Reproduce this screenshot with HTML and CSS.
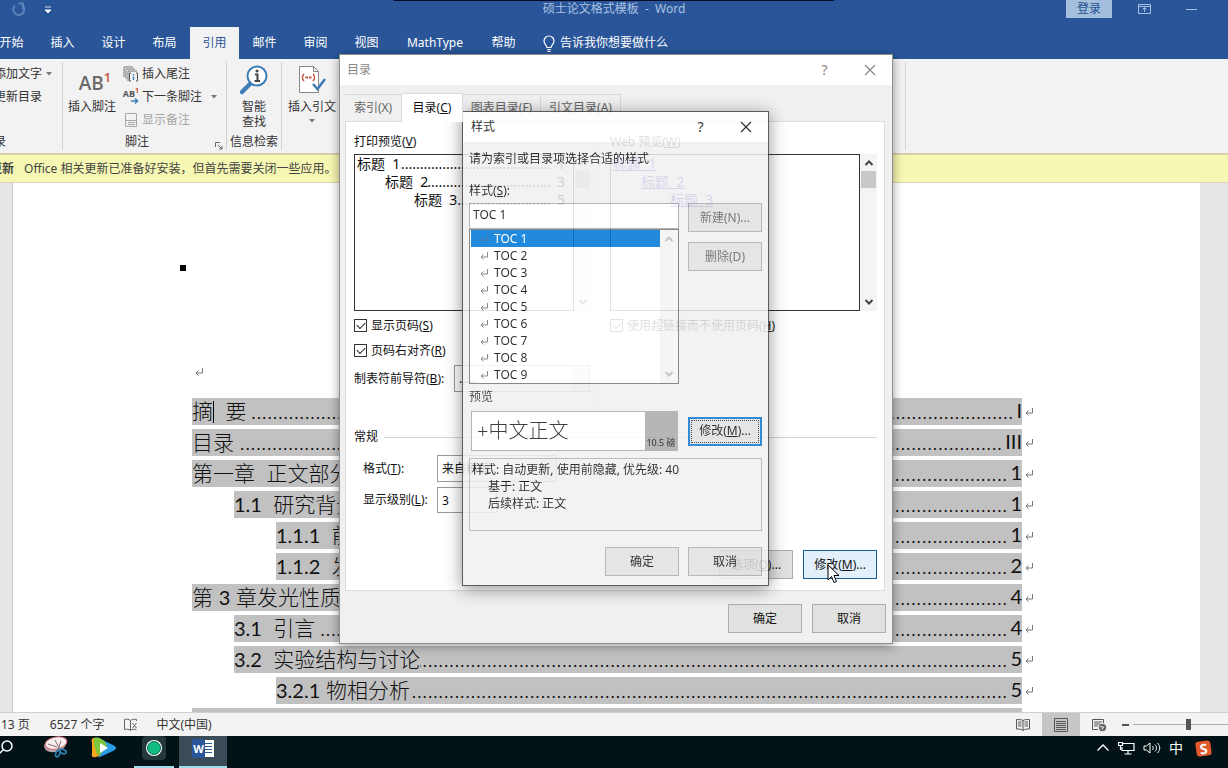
FILE: index.html
```html
<!DOCTYPE html>
<html lang="zh-CN">
<head>
<meta charset="utf-8">
<title>硕士论文格式模板 - Word</title>
<link rel="stylesheet" href="styles.css">
</head>
<body>
<svg class="defs" aria-hidden="true">
  <symbol id="ret" viewBox="0 0 10 10"><path d="M8.500 1v5H2M4.500 3.500L2 6l2.500 2.500" fill="none" stroke="currentColor"/></symbol>
  <symbol id="close" viewBox="0 0 12 12"><path d="M1 1l10 10M11 1L1 11" fill="none" stroke="currentColor" stroke-width="1.200"/></symbol>
  <symbol id="up" viewBox="0 0 10 8"><path d="M1.500 6L5 2.500 8.500 6" fill="none" stroke="currentColor" stroke-width="2"/></symbol>
  <symbol id="down" viewBox="0 0 10 8"><path d="M1.500 2L5 5.500 8.500 2" fill="none" stroke="currentColor" stroke-width="2"/></symbol>
  <symbol id="caret" viewBox="0 0 6 4"><path d="M0 0h6L3 3.500z" fill="currentColor"/></symbol>
</svg>

<header class="titlebar">
  <div class="quick">
    <svg width="20" height="16" viewBox="0 0 20 16" class="dim"><path d="M5 3.500A5.500 5.500 0 1 0 12 3M8.500 1.500H14M13 2v5.500" fill="none" stroke="currentColor" stroke-width="2"/></svg>
    <svg width="8" height="8" viewBox="0 0 8 8"><path d="M1 1h6M1 4h6L4 7z" fill="#fff" stroke="#fff" stroke-width=".8"/></svg>
  </div>
  <h1 class="doc-title">硕士论文格式模板&nbsp; -&nbsp; Word</h1>
  <div class="win">
    <button class="login">登录</button>
    <svg width="14" height="12" viewBox="0 0 14 12"><path d="M.5 1.500h12v9H.5zM.5 3.500h12M6.500 9V5M4.500 6.500l2-2 2 2" fill="none" stroke="currentColor"/></svg>
    <svg width="12" height="12" viewBox="0 0 12 12"><path d="M0 6.500h11" stroke="currentColor"/></svg>
  </div>
</header>

<nav class="tabs">
  <button>开始</button><button>插入</button><button>设计</button><button>布局</button><button class="on">引用</button><button>邮件</button><button>审阅</button><button>视图</button><button class="wide">MathType</button><button>帮助</button>
  <button class="tell"><svg width="12" height="17" viewBox="0 0 12 17"><path d="M4 12.500c0-2-3-3-3-6.500a5 5 0 0 1 10 0c0 3.500-3 4.500-3 6.500zM4 14.500h4M4.500 16.300h3" fill="none" stroke="#fff" stroke-width="1.200"/></svg>告诉我你想要做什么</button>
</nav>

<section class="ribbon">
  <div class="group g-toc">
    <button class="small">添加文字<svg width="6" height="4"><use href="#caret"/></svg></button>
    <button class="small">更新目录</button>
    <div class="glabel">目录</div>
  </div>
  <div class="group g-foot">
    <button class="big"><span class="ab">AB<sup>1</sup></span>插入脚注</button>
    <div class="stack">
      <button class="small"><svg width="16" height="16" viewBox="0 0 16 16"><path d="M1 11V1h9M3 13V3h9M5 15V5h9" fill="none" stroke="#777"/><path d="M8 7H6.500v8H8M13 7h1.500v8H13" fill="none" stroke="#555"/><path d="M10.500 8v1.500M10.500 10.500V14" stroke="#3e7cb5" stroke-width="1.400"/></svg>插入尾注</button>
      <button class="small"><span class="ab2"><span>AB<sup>1</sup></span><svg width="8" height="6" viewBox="0 0 8 6"><path d="M0 3h6M4 .5L6.500 3 4 5.500" fill="none" stroke="#3e7cb5" stroke-width="1.500"/></svg></span>下一条脚注<svg class="far" width="6" height="4"><use href="#caret"/></svg></button>
      <button class="small off"><svg width="16" height="16" viewBox="0 0 16 16"><path d="M2.500 1.500h11v13h-11zM2.500 8.500h11M5 10.500h7M5 12.500h7" fill="none" stroke="currentColor"/></svg>显示备注</button>
    </div>
    <div class="glabel">脚注</div>
    <svg class="launch" width="8" height="8" viewBox="0 0 8 8"><path d="M.5 5V.5H5M3 3l4 4M7 4v3H4" fill="none" stroke="#666"/></svg>
  </div>
  <div class="group g-look">
    <button class="big"><svg width="28" height="30" viewBox="0 0 28 30"><path d="M10 19L2 27" stroke="#3e7cb5" stroke-width="4.500" stroke-linecap="round"/><circle cx="17" cy="11" r="9.500" fill="#fff" stroke="#3e7cb5" stroke-width="2"/><path d="M15 9.500h2.500v6M14.500 16h5.500" fill="none" stroke="#444" stroke-width="2"/><circle cx="17" cy="6" r="1.500" fill="#444"/></svg>智能<br>查找</button>
    <div class="glabel">信息检索</div>
  </div>
  <div class="group g-cite">
    <button class="big"><svg width="28" height="30" viewBox="0 0 28 30"><path d="M1.500 1.500h14l5 5v21h-19zM15.500 1.500v5h5" fill="#fff" stroke="#888"/><path d="M6 9c-2 2-2 5 0 7M15 9c2 2 2 5 0 7" fill="none" stroke="#c8513c" stroke-width="1.500"/><path d="M7.500 12.500h2.500M11 12.500h2.500" stroke="#c8513c" stroke-width="2"/><path d="M15 19l4.500 5L27 14" fill="none" stroke="#3e7cb5" stroke-width="2.500"/></svg>插入引文<svg class="under" width="6" height="4"><use href="#caret"/></svg></button>
  </div>
</section>

<div class="notice"><b>更新</b><span>Office 相关更新已准备好安装，但首先需要关闭一些应用。</span></div>

<main class="desk">
  <article class="page">
    <div class="bullet"></div>
    <div class="mark"><svg width="10" height="10"><use href="#ret"/></svg></div>
    <div class="toc">
      <div class="row"><p><span>摘<i class="cursor"></i>&nbsp; 要&nbsp;</span><span class="leader"></span><span class="n">I</span></p><svg width="10" height="10"><use href="#ret"/></svg></div>
      <div class="row"><p><span>目录&nbsp;</span><span class="leader"></span><span class="n">III</span></p><svg width="10" height="10"><use href="#ret"/></svg></div>
      <div class="row"><p><span>第一章&nbsp; 正文部分</span><span class="leader"></span><span class="n">1</span></p><svg width="10" height="10"><use href="#ret"/></svg></div>
      <div class="row l2"><p><span><b>1.1</b>&nbsp; 研究背景</span><span class="leader"></span><span class="n">1</span></p><svg width="10" height="10"><use href="#ret"/></svg></div>
      <div class="row l3"><p><span><b>1.1.1</b>&nbsp; 前言</span><span class="leader"></span><span class="n">1</span></p><svg width="10" height="10"><use href="#ret"/></svg></div>
      <div class="row l3"><p><span><b>1.1.2</b>&nbsp; 发展</span><span class="leader"></span><span class="n">2</span></p><svg width="10" height="10"><use href="#ret"/></svg></div>
      <div class="row"><p><span>第 <b>3</b> 章发光性质</span><span class="leader"></span><span class="n">4</span></p><svg width="10" height="10"><use href="#ret"/></svg></div>
      <div class="row l2"><p><span><b>3.1</b>&nbsp; 引言&nbsp;</span><span class="leader"></span><span class="n">4</span></p><svg width="10" height="10"><use href="#ret"/></svg></div>
      <div class="row l2"><p><span><b>3.2</b>&nbsp; 实验结构与讨论</span><span class="leader"></span><span class="n">5</span></p><svg width="10" height="10"><use href="#ret"/></svg></div>
      <div class="row l3"><p><span><b>3.2.1</b> 物相分析</span><span class="leader"></span><span class="n">5</span></p><svg width="10" height="10"><use href="#ret"/></svg></div>
      <div class="row"><p></p><svg width="10" height="10"></svg></div>
    </div>
  </article>
</main>

<footer class="status">
  <span>13 页</span><span class="words">6527 个字</span>
  <svg class="proof" width="14" height="14" viewBox="0 0 14 14"><path d="M6.500 2.500v10M6.500 2.500C5 1 2.500 1 .5 1.500v10c2-.5 4.500-.5 6 1M6.500 2.500c1-1 3-1.500 6-1V3M6.500 12.500c1.500-1.500 4-1.500 6-1M8.500 5l4 5M12.500 5l-4 5" fill="none" stroke="#666"/></svg>
  <span>中文(中国)</span>
  <div class="views">
    <button aria-label="阅读视图"><svg width="14" height="14" viewBox="0 0 14 14"><path d="M7 2.500v10M7 2.500C5.500 1.500 3 1.500.5 1.500v9.500c2.500 0 5 0 6.500 1.500 1.500-1.500 4-1.500 6.500-1.500V1.500c-2.500 0-5 0-6.500 1M2 4h3.500M2 6h3.500M2 8h3.500M8.500 4H12M8.500 6H12M8.500 8H12" fill="none" stroke="#555"/></svg></button>
    <button class="on" aria-label="页面视图"><svg width="14" height="14" viewBox="0 0 14 14"><path d="M.5.5h13v13H.5zM2 3.500h10M2 5.500h10M2 7.500h10M2 9.500h10M2 11.500h10" fill="none" stroke="#555"/></svg></button>
    <button aria-label="Web 版式"><svg width="15" height="14" viewBox="0 0 15 14"><path d="M6 11.500H.5v-10h11V5M2 4h8M2 6h6M2 8h4" fill="none" stroke="#555"/><circle cx="10.500" cy="9.500" r="3.700" fill="#666"/><path d="M8 8.500l3 .5M10 11.500l2-3" stroke="#eee"/></svg></button>
    <span class="minus"></span>
    <input class="zoom" type="range" min="0" max="100" value="59" aria-label="缩放">
  </div>
</footer>

<div class="taskbar">
  <button class="task t-search" aria-label="搜索"><svg width="16" height="16" viewBox="0 0 16 16"><circle cx="9" cy="6" r="5" fill="none" stroke="#fff" stroke-width="1.500"/><path d="M5.500 9.500L0 15" stroke="#fff" stroke-width="1.500"/></svg></button>
  <button class="task" aria-label="截图"><svg width="26" height="24" viewBox="0 0 26 24"><ellipse cx="12" cy="9" rx="11" ry="7" transform="rotate(-12 12 9)" fill="#b9a9ad"/><ellipse cx="13" cy="7" rx="11" ry="6" transform="rotate(-12 13 7)" fill="#f7eeee" stroke="#d96a78"/><path d="M12 4l5 10M18 5l-3 9M5 8l9 3" stroke="#8a6a70"/><g fill="none" stroke="#2f7fae" stroke-width="1.700"><ellipse cx="15" cy="17.500" rx="2" ry="3.500" transform="rotate(20 15 17)"/><ellipse cx="20" cy="15.500" rx="3.500" ry="2" transform="rotate(20 20 15)"/></g></svg></button>
  <button class="task" aria-label="视频"><svg width="26" height="22" viewBox="0 0 26 22"><path d="M3 1C1 1 0 3 1 6v10c-1 4 1 5 4 4l9-3V4z" fill="#f6a51e"/><path d="M5 0l17 8c4 2 4 4 0 6L7 21c5-5 5-14-2-21z" fill="#2a9be6"/><path d="M3 1c6-2 12 4 13 8l-8 10c-3-2-6-12-5-18z" fill="#7cc63c"/><path d="M9 6l8 5-8 5z" fill="#fff"/></svg></button>
  <button class="task run" aria-label="录制"><svg width="24" height="24" viewBox="0 0 24 24"><rect width="24" height="24" rx="4" fill="#23383a"/><circle cx="12" cy="12" r="8" fill="#fff"/><circle cx="12" cy="12" r="6.500" fill="#10bd83" stroke="#0a6d50"/></svg></button>
  <button class="task run cur" aria-label="Word"><span class="wicon">W</span><svg width="9" height="17" viewBox="0 0 9 17"><path d="M0 0h9v17H0z" fill="#fff"/><path d="M0 3.500h7M0 6.500h7M0 9.500h7M0 12.500h7" stroke="#2b579a"/></svg></button>
  <div class="tray">
    <svg width="14" height="14" viewBox="0 0 14 14"><path d="M1.500 9.500L7 4l5.500 5.500" fill="none" stroke="#fff" stroke-width="1.300"/></svg>
    <svg width="17" height="14" viewBox="0 0 17 14"><path d="M5 2.500h11v7H4V6M10 9.500v3.500M6.500 13h7M.5 1.500h4v3h-4zM2.500 4.500V9" fill="none" stroke="#fff" stroke-width="1.200"/></svg>
    <svg width="18" height="14" viewBox="0 0 18 14"><path d="M1 5h2.500L7 2v10L3.500 9H1zM9.500 5c1 1.500 1 3 0 4M12 3.500c2 2.500 2 4.500 0 7M14.500 2c3 3.500 3 6.500 0 10" fill="none" stroke="#fff"/></svg>
    <span class="ime">中</span>
    <span class="sogou">S</span>
  </div>
</div>

<section class="dialog dlg-toc" role="dialog" aria-label="目录">
  <header><h2>目录</h2><button>?</button><button aria-label="关闭"><svg width="12" height="12"><use href="#close"/></svg></button></header>
  <div class="dtabs"><button class="w1">索引(X)</button><button class="on">目录(<u>C</u>)</button><button class="w3">图表目录(F)</button><button class="w4">引文目录(A)</button></div>
  <div class="panel">
    <div class="cols">
      <div class="left">
        <div class="lab">打印预览(<u>V</u>)</div>
        <div class="preview">
          <div class="paper">
            <p><span>标题&nbsp; 1</span><span class="leader"></span><span>1</span></p>
            <p class="i1"><span>标题&nbsp; 2</span><span class="leader"></span><span>3</span></p>
            <p class="i2"><span>标题&nbsp; 3</span><span class="leader"></span><span>5</span></p>
          </div>
          <div class="sbar"><svg width="10" height="8"><use href="#up"/></svg><i></i><svg width="10" height="8"><use href="#down"/></svg></div>
        </div>
        <label class="chk"><input type="checkbox" checked><span>显示页码(<u>S</u>)</span></label>
        <label class="chk second"><input type="checkbox" checked><span>页码右对齐(<u>R</u>)</span></label>
        <div class="field lead"><label for="lead">制表符前导符(<u>B</u>):</label><select id="lead"><option>......</option></select></div>
      </div>
      <div class="right">
        <div class="lab">Web 预览(<u>W</u>)</div>
        <div class="preview">
          <div class="paper web">
            <p><a href="#">标题&nbsp; 1</a></p>
            <p class="i1"><a href="#">标题&nbsp; 2</a></p>
            <p class="i2"><a href="#">标题&nbsp; 3</a></p>
          </div>
          <div class="sbar"><svg width="10" height="8"><use href="#up"/></svg><i></i><svg width="10" height="8"><use href="#down"/></svg></div>
        </div>
        <label class="chk"><input type="checkbox" checked><span>使用超链接而不使用页码(<u>H</u>)</span></label>
      </div>
    </div>
    <div class="legend">常规</div>
    <div class="field fmt"><label for="fmt">格式(<u>T</u>):</label><select id="fmt"><option>来自模板</option></select></div>
    <div class="field lvl"><label for="lvl">显示级别(<u>L</u>):</label><input id="lvl" type="text" value="3"></div>
    <div class="btns"><button class="btn">选项(<u>O</u>)...</button><button class="btn hot">修改(<u>M</u>)...</button></div>
  </div>
  <div class="btns foot"><button class="btn">确定</button><button class="btn">取消</button></div>
</section>

<section class="dialog dlg-style" role="dialog" aria-label="样式">
  <header><h2>样式</h2><button>?</button><button aria-label="关闭"><svg width="12" height="12"><use href="#close"/></svg></button></header>
  <div class="body">
    <p class="hint">请为索引或目录项选择合适的样式</p>
    <label class="lab" for="st">样式(<u>S</u>):</label>
    <div class="pick">
      <div>
        <input id="st" type="text" value="TOC 1">
        <div class="list">
          <ul role="listbox" aria-label="样式">
            <li class="sel"><svg width="10" height="10"><use href="#ret"/></svg>TOC 1</li>
            <li><svg width="10" height="10"><use href="#ret"/></svg>TOC 2</li>
            <li><svg width="10" height="10"><use href="#ret"/></svg>TOC 3</li>
            <li><svg width="10" height="10"><use href="#ret"/></svg>TOC 4</li>
            <li><svg width="10" height="10"><use href="#ret"/></svg>TOC 5</li>
            <li><svg width="10" height="10"><use href="#ret"/></svg>TOC 6</li>
            <li><svg width="10" height="10"><use href="#ret"/></svg>TOC 7</li>
            <li><svg width="10" height="10"><use href="#ret"/></svg>TOC 8</li>
            <li><svg width="10" height="10"><use href="#ret"/></svg>TOC 9</li>
          </ul>
          <div class="sbar pale"><svg width="10" height="8"><use href="#up"/></svg><svg width="10" height="8"><use href="#down"/></svg></div>
        </div>
      </div>
      <div class="side"><button class="btn off">新建(N)...</button><button class="btn off">删除(D)</button></div>
    </div>
    <div class="lab pv">预览</div>
    <div class="pick mid">
      <div class="sample"><span>+中文正文</span><small>10.5 磅</small></div>
      <button class="btn focus">修改(<u>M</u>)...</button>
    </div>
    <div class="desc">样式: 自动更新, 使用前隐藏, 优先级: 40<p>基于: 正文</p><p>后续样式: 正文</p></div>
    <div class="btns"><button class="btn">确定</button><button class="btn">取消</button></div>
  </div>
</section>

<svg class="pointer" width="13" height="20" viewBox="0 0 13 20"><path d="M1 1v15l3.500-3.500L7 18.500l2.500-1L7 11.500h5z" fill="#fff" stroke="#000"/></svg>
</body>
</html>
```
FILE: styles.css
```css
* { box-sizing: border-box; margin: 0; padding: 0; }
body {
  display: flex; flex-direction: column; height: 100vh; overflow: hidden; position: relative;
  font: 12px/16px "Noto Sans", "Noto Sans CJK SC", sans-serif; color: #333; background: #e6e6e6;
}
button, input, select { font: inherit; color: inherit; background: none; border: 0; }
ul { list-style: none; }
h1, h2 { font-size: 12px; font-weight: 400; }
svg { flex: none; display: block; }
.defs { position: absolute; width: 0; height: 0; }

/* title bar */
.titlebar { display: grid; grid-template-columns: 1fr auto 1fr; height: 27px; background: linear-gradient(90deg, #010a26, #010a26) 50% 0 / 440px 1px no-repeat #2a5699; color: #a9c1e4; }
.quick { display: flex; align-items: center; gap: 14px; padding: 0 0 8px 10px; }
.dim { color: #5c82b8; }
.doc-title { line-height: 18px; }
.win { display: flex; justify-content: flex-end; gap: 26px; padding-right: 30px; }
.win svg { margin-top: 3px; }
.win svg + svg { margin-left: 8px; }
.login { width: 46px; height: 18px; background: #a3bfdd; color: #24508f; }

/* ribbon tabs */
.tabs { display: flex; height: 32px; background: #2a5699; color: #fff; margin-left: -14px; }
.tabs button { width: 51px; line-height: 30px; flex: none; }
.tabs .on { width: 49px; background: #f2f2f2; color: #2a5699; }
.tabs .wide { width: 86px; }
.tabs .tell { display: flex; width: auto; align-items: center; gap: 5px; padding-left: 14px; }

/* ribbon */
.ribbon { display: flex; flex: none; height: 94px; margin-left: -6px; padding: 3px 0; background: #f2f2f2; }
.group { display: grid; grid-template-rows: 23px 23px 23px 22px; grid-template-columns: auto 1fr; border-right: 1px solid #d2d2d2; }
.small { display: flex; align-items: center; gap: 3px; white-space: nowrap; }
.small .far { margin-left: 6px; }
.off { color: #a6a6a6; }
.small svg[height="4"], .under { color: #777; }
.stack { grid-row: 1 / 4; display: grid; grid-template-rows: 23px 23px 23px; justify-items: start; }
.glabel { grid-row: 4; align-self: center; text-align: center; grid-column: 1 / -1; }
.g-toc { flex: 0 0 69px; }
.g-toc .small { grid-column: 1 / -1; gap: 4px; }
.g-toc .glabel { text-align: left; margin-left: -12px; }
.g-foot { flex: 0 0 164px; padding-left: 5px; column-gap: 7px; position: relative; }
.g-foot .glabel { padding-right: 20px; }
.launch { position: absolute; right: 3px; bottom: 0; }
.g-look { flex: 0 0 55px; }
.g-cite { flex: 0 0 624px; }
.g-cite .big { width: 60px; }
.big { grid-row: 1 / 4; display: flex; flex-direction: column; align-items: center; justify-content: flex-start; line-height: 15px; padding-top: 3px; white-space: nowrap; }
.g-look .big { grid-column: 1 / -1; }
.big > svg:first-child { margin-bottom: 4px; }
.under { margin-top: 5px; }
.ab { height: 34px; padding: 9px 0 0 6px; font: 600 19px/18px "Open Sans", sans-serif; color: #6a6a6a; }
.ab sup { font-size: 13px; line-height: 0; color: #c8513c; vertical-align: 8px; }
.ab2 { display: flex; flex-direction: column; align-items: flex-end; width: 16px; font: bold 9px/9px "Open Sans", sans-serif; color: #555; }
.ab2 sup { font-size: 7px; line-height: 0; color: #c8513c; }

.notice { flex: none; display: flex; align-items: center; gap: 10px; height: 30px; margin-left: -10px; background: #f6f7b2; border-top: 2px solid #d3d2a8; border-bottom: 1px solid #d8d8b8; color: #444; white-space: nowrap; }

/* document */
.desk { flex: 1; min-height: 0; padding: 0 28px 0 12px; overflow: hidden; }
.page { height: 100%; overflow: hidden; background: #fff; border-left: 1px solid #ccc; padding: 82px 166px 0 167px; color: #222; }
.bullet { width: 6px; height: 6px; background: #000; }
.mark { padding: 96px 0 21px 14px; color: #777; }
.toc { display: flex; flex-direction: column; gap: 4px; margin-left: 12px; }
.row { display: flex; align-items: center; gap: 2px; color: #777; }
.row p { flex: 1; min-width: 0; display: flex; height: 27px; overflow: hidden; background: #c1c1c1; color: #111; font: 300 21px/25px "Lato", "Noto Sans CJK SC", sans-serif; white-space: nowrap; }
.row b, .row .n { font: 400 20px/25px "Lato", sans-serif; color: #111; }
.row .n { padding-left: 3px; }
.row.l2 { padding-left: 42px; }
.row.l3 { padding-left: 84px; }
.cursor { display: inline-block; width: 1px; height: 22px; background: #000; vertical-align: -4px; }
.leader { flex: 1; min-width: 0; display: flex; justify-content: flex-end; overflow: hidden; }
.leader::before { content: "......................................................................................................................................................................"; }
.row .leader { font-size: 23px; }

/* status bar */
.status { flex: none; display: flex; align-items: center; height: 24px; padding-left: 1px; background: #f3f3f3; border-top: 1px solid #d0d0d0; white-space: nowrap; }
.words { margin-left: 20px; }
.proof { margin: 0 18px 0 20px; }
.views { display: flex; align-items: center; margin-left: auto; height: 100%; }
.views button { display: grid; place-items: center; width: 38px; height: 100%; }
.views .on { background: #c6c6c6; }
.minus { width: 7px; height: 2px; margin: 0 4px; background: #555; }
.zoom { appearance: none; width: 95px; height: 14px; background: linear-gradient(#aaa, #aaa) 0 50% / 100% 1px no-repeat; }
.zoom::-webkit-slider-thumb { appearance: none; width: 5px; height: 11px; background: #555; }

/* taskbar */
.taskbar { flex: none; display: flex; align-items: center; height: 32px; background: #021216; }
.task { display: flex; align-items: center; justify-content: center; width: 48px; height: 32px; padding-bottom: 8px; }
.task.t-search { width: 32px; justify-content: flex-start; margin-left: -2px; margin-right: 2px; }
.task.run { width: 40px; margin: 0 5px 0 6px; border-bottom: 2px solid #9fdcec; padding-bottom: 6px; }
.task.cur { width: 48px; margin: 0; background: #3a4c55; }
.wicon { width: 13px; background: #2b579a; color: #fff; font: bold 11px/19px "Open Sans", sans-serif; }
.tray { display: flex; align-items: center; gap: 8px; margin-left: auto; padding: 0 17px 8px 0; color: #fff; }
.ime { font-size: 14px; }
.sogou { width: 15px; margin-left: 5px; border-radius: 3px; background: #e2592b; font: bold 14px/15px "Open Sans", sans-serif; text-align: center; rotate: -8deg; }

/* dialogs */
.dialog { position: absolute; border: 1px solid #8f8f8f; background: #f0f0f0; color: #111; box-shadow: 0 2px 10px rgba(0, 0, 0, .4); white-space: nowrap; }
.dialog > header { display: flex; align-items: center; height: 30px; padding-left: 8px; background: #fff; }
.dialog h2 { margin-right: auto; }
.dialog > header button { display: grid; place-items: center; width: 45px; height: 30px; font-size: 14px; }
.dlg-toc { left: 339px; top: 54px; width: 554px; padding-bottom: 10px; }
.dlg-toc > header { padding-left: 7px; color: #888; }
.dlg-style { left: 462px; top: 111px; width: 307px; border-color: #444; opacity: .87; box-shadow: 0 3px 16px rgba(0, 0, 0, .5); }
.dlg-style > header { color: #111; }

.dtabs { display: flex; align-items: flex-end; padding: 8px 5px 0; height: 36px; color: #666; }
.dtabs button { height: 27px; border: 1px solid #d9d9d9; border-bottom: 0; border-left: 0; }
.dtabs .w1 { width: 57px; }
.dtabs .on { width: 61px; height: 29px; margin-bottom: -1px; background: #fff; color: #111; z-index: 1; }
.dtabs .w3 { width: 78px; }
.dtabs .w4 { width: 80px; }
.panel { margin: 0 7px 0 5px; padding: 12px 7px 11px 8px; background: #fff; border: 1px solid #dcdcdc; }
.cols { display: grid; grid-template-columns: 246px minmax(0, 1fr); gap: 10px; }
.left { padding: 0 8px 28px 0; border-right: 1px solid #ddd; }
.lab { display: block; }
.preview { display: flex; height: 157px; margin-top: 4px; }
.paper { flex: 1; min-width: 0; border: 1px solid #333; padding: 0 8px 0 2px; font: 14px/18px "Noto Sans", "Noto Sans CJK SC", sans-serif; }
.paper p { display: flex; }
.paper .leader { margin-right: 6px; }
.i1 { padding-left: 28px; }
.i2 { padding-left: 57px; }
.web a { color: #3333cc; }
.sbar { display: flex; flex-direction: column; flex: none; align-items: center; width: 17px; padding: 5px 0; background: #f4f4f4; color: #444; }
.sbar i { width: 15px; height: 17px; margin-top: 4px; background: #c9c9c9; }
.sbar svg:last-child { margin-top: auto; }
.chk { display: flex; align-items: center; gap: 4px; height: 17px; margin-top: 6px; }
.chk.second { margin-top: 8px; }
.chk input { appearance: none; width: 13px; height: 13px; border: 1px solid #333; background: #fff; position: relative; }
.chk input::after { content: ""; position: absolute; left: 2px; top: 2px; width: 7px; height: 4px; border: solid #222; border-width: 0 0 1px 1px; rotate: -45deg; }
.field { display: grid; align-items: center; }
.field select, .field input { appearance: none; height: 100%; padding: 0 4px; border: 1px solid #999; background: #fff; }
.field select { background: linear-gradient(#e6e6e6, #e6e6e6) 100% 0 / 17px 100% no-repeat #fff; }
.lead { grid-template-columns: 100px 136px; height: 27px; margin-top: 6px; }
.fmt, .lvl { padding-left: 9px; grid-template-columns: 74px 120px; }
.fmt { height: 27px; margin-top: 10px; }
.lvl { grid-template-columns: 74px 60px; height: 26px; margin-top: 5px; }
.legend { display: flex; align-items: center; gap: 6px; margin-top: 9px; }
.legend::after { content: ""; flex: 1; height: 1px; background: #d4d4d4; }
.btns { display: flex; justify-content: flex-end; gap: 10px; }
.panel .btns { margin-top: 37px; }
.foot { margin: 13px 6px 0; }
.btn { width: 74px; height: 29px; border: 1px solid #adadad; background: #e1e1e1; color: #111; }
.btn.off { color: #666; }
.btn.hot { background: #e3f0fb; border-color: #1a5f93; }
.btn.focus { border: 2px solid #1478d0; outline: 1px dotted #333; outline-offset: -4px; }

.body { padding: 9px 6px 9px; }
.hint { margin-bottom: 16px; }
.pick { display: grid; grid-template-columns: 1fr 74px; gap: 9px; margin-top: 4px; }
.pick.mid { align-items: center; margin-top: 6px; }
.pick input { display: block; width: 100%; height: 26px; padding: 0 3px 3px; border: 1px solid #aaa; background: #fff; }
.list { display: flex; border: 1px solid #777; background: #fff; }
.list ul { flex: 1; padding-left: 1px; }
.list li { display: flex; align-items: center; gap: 5px; height: 17px; padding-left: 8px; }
.list li svg { color: #777; }
.list .sel { background: #0078d7; color: #fff; }
.list .sel svg { color: #2a66a0; }
.sbar.pale { color: #bbb; width: 18px; }
.side { display: flex; flex-direction: column; gap: 10px; }
.pv { margin-top: 5px; color: #333; }
.sample { display: flex; height: 40px; margin: 0 1px 0 2px; border: 1px solid #aaa; background: #fff; font: 300 20px/38px "Noto Sans", "Noto Sans CJK SC", sans-serif; color: #222; padding-left: 5px; }
.sample small { display: flex; align-items: flex-end; justify-content: center; width: 32px; margin-left: auto; background: #ababab; font-size: 9px; line-height: 14px; color: #111; font-weight: 400; }
.desc { height: 73px; margin: 7px 0 16px; padding: 2px 2px; border: 1px solid #b4b4b4; line-height: 17px; }
.desc p { padding-left: 16px; }
.body .btns { gap: 9px; }

.pointer { position: absolute; left: 827px; top: 564px; }
```
